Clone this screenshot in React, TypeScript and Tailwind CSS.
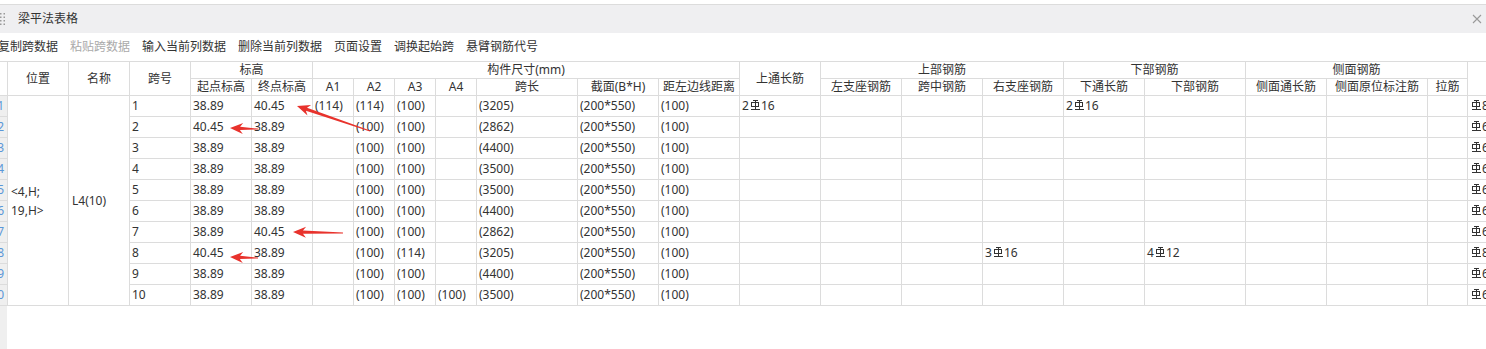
import React from "react";

const FONT = { fontFamily: '"Noto Sans", "Noto Sans CJK SC", sans-serif' };

// rebar grade glyph (HRB400), drawn since no font carries it
function Bar() {
  return (
    <svg width="10" height="10" viewBox="0 0 10 10" className="inline-block -mt-[3px] mx-[1px] shrink-0">
      <g stroke="#333" strokeWidth="1" fill="none" shapeRendering="crispEdges">
        <line x1="2.5" y1="0.5" x2="7.5" y2="0.5" />
        <rect x="1.5" y="2.5" width="7" height="4" />
        <line x1="5" y1="0.5" x2="5" y2="9" />
        <line x1="0.5" y1="9" x2="9.5" y2="9" />
      </g>
    </svg>
  );
}

type V = string | { n?: string; d: string };

function Val({ v }: { v: V }) {
  if (typeof v === "string") return <>{v}</>;
  return (
    <span className="inline-flex items-center">
      {v.n}
      <Bar />
      {v.d}
    </span>
  );
}

const E = "";
const r = (n: string, d: string) => ({ n, d });

// 跨号, 起点, 终点, A1..A4, 跨长, 截面, 距左, 上通长, 左支座, 跨中, 右支座, 下通长, 下部, 侧通长, 侧原位, 拉筋, 末列
const ROWS: V[][] = [
  ["1", "38.89", "40.45", "(114)", "(114)", "(100)", E, "(3205)", "(200*550)", "(100)", r("2", "16"), E, E, E, r("2", "16"), E, E, E, E, r("", "8")],
  ["2", "40.45", "38.89", E, "(100)", "(100)", E, "(2862)", "(200*550)", "(100)", E, E, E, E, E, E, E, E, E, r("", "6")],
  ["3", "38.89", "38.89", E, "(100)", "(100)", E, "(4400)", "(200*550)", "(100)", E, E, E, E, E, E, E, E, E, r("", "6")],
  ["4", "38.89", "38.89", E, "(100)", "(100)", E, "(3500)", "(200*550)", "(100)", E, E, E, E, E, E, E, E, E, r("", "6")],
  ["5", "38.89", "38.89", E, "(100)", "(100)", E, "(3500)", "(200*550)", "(100)", E, E, E, E, E, E, E, E, E, r("", "6")],
  ["6", "38.89", "38.89", E, "(100)", "(100)", E, "(4400)", "(200*550)", "(100)", E, E, E, E, E, E, E, E, E, r("", "6")],
  ["7", "38.89", "40.45", E, "(100)", "(100)", E, "(2862)", "(200*550)", "(100)", E, E, E, E, E, E, E, E, E, r("", "6")],
  ["8", "40.45", "38.89", E, "(100)", "(114)", E, "(3205)", "(200*550)", "(100)", E, E, E, r("3", "16"), E, r("4", "12"), E, E, E, r("", "8")],
  ["9", "38.89", "38.89", E, "(100)", "(100)", E, "(4400)", "(200*550)", "(100)", E, E, E, E, E, E, E, E, E, r("", "6")],
  ["10", "38.89", "38.89", E, "(100)", "(100)", "(100)", "(3500)", "(200*550)", "(100)", E, E, E, E, E, E, E, E, E, r("", "6")],
];

const TOOLS = ["复制跨数据", "粘贴跨数据", "输入当前列数据", "删除当前列数据", "页面设置", "调换起始跨", "悬臂钢筋代号"];

function H({ children, className = "" }: { children?: React.ReactNode; className?: string }) {
  return <div className={`bg-white flex items-center justify-center whitespace-nowrap ${className}`}>{children}</div>;
}

function arrow(x1: number, y1: number, x2: number, y2: number) {
  const L = Math.hypot(x2 - x1, y2 - y1);
  const dx = (x2 - x1) / L, dy = (y2 - y1) / L;
  const nx = -dy, ny = dx;
  const h = 13;
  const bx = x2 - dx * h, by = y2 - dy * h;
  const kx = x2 - dx * (h - 3), ky = y2 - dy * (h - 3);
  const p = (x: number, y: number) => `${x.toFixed(1)},${y.toFixed(1)}`;
  return [
    p(x1 + nx * 0.4, y1 + ny * 0.4),
    p(kx + nx * 1.6, ky + ny * 1.6),
    p(bx + nx * 5.5, by + ny * 5.5),
    p(x2, y2),
    p(bx - nx * 5.5, by - ny * 5.5),
    p(kx - nx * 1.6, ky - ny * 1.6),
    p(x1 - nx * 0.4, y1 - ny * 0.4),
  ].join(" ");
}

export default function App() {
  return (
    <div className="relative w-[1486px] h-[349px] overflow-hidden bg-white text-[12px] text-[#333]" style={FONT}>
      <div className="flex flex-col h-full">
        <div className="h-[4px] bg-white" />
        {/* title bar */}
        <div className="h-[29px] border-t border-[#dcdcdc] bg-[#efeff1] flex items-center">
          <svg width="6" height="14" viewBox="0 0 6 14">
            {[1, 4.5, 8, 11.5].map((y) => (
              <g key={y} fill="#999">
                <rect x="0" y={y} width="1.5" height="1.5" />
                <rect x="3.5" y={y} width="1.5" height="1.5" />
              </g>
            ))}
          </svg>
          <span className="ml-[12px] text-[12px] text-[#333]">梁平法表格</span>
          <svg width="10" height="10" viewBox="0 0 10 10" className="ml-auto mr-[4px]">
            <path d="M1 1L9 9M9 1L1 9" stroke="#9a9a9a" strokeWidth="1.1" />
          </svg>
        </div>
        {/* toolbar */}
        <div className="h-[28px] flex items-center gap-3 -ml-[2px]">
          {TOOLS.map((t, i) => (
            <span key={t} className={i === 1 ? "text-[#aaa]" : "text-[#333]"}>
              {t}
            </span>
          ))}
        </div>
        {/* table */}
        <div className="overflow-hidden">
          <div className="w-max grid grid-cols-[7px_60px_60px_60px_60px_60px_40px_40px_40px_40px_100px_80px_80px_80px_80px_80px_80px_80px_100px_80px_100px_39px_60px] grid-rows-[16px_16px_repeat(10,20px)] gap-px py-px bg-[#dcdcdc]">
            <H className="row-span-2" />
            <H className="row-span-2">位置</H>
            <H className="row-span-2">名称</H>
            <H className="row-span-2">跨号</H>
            <H className="col-span-2">标高</H>
            <H className="col-span-7">构件尺寸(mm)</H>
            <H className="row-span-2">上通长筋</H>
            <H className="col-span-3">上部钢筋</H>
            <H className="col-span-2">下部钢筋</H>
            <H className="col-span-3">侧面钢筋</H>
            <H className="row-span-2" />
            {["起点标高", "终点标高", "A1", "A2", "A3", "A4", "跨长", "截面(B*H)", "距左边线距离", "左支座钢筋", "跨中钢筋", "右支座钢筋", "下通长筋", "下部钢筋", "侧面通长筋", "侧面原位标注筋", "拉筋"].map((t) => (
              <H key={t}>{t}</H>
            ))}
            {ROWS.map((row, i) => (
              <React.Fragment key={i}>
                <div className="bg-[#efefef] overflow-hidden flex items-center justify-end pr-[3px] text-[#5b97d8]">
                  <span>{i + 1}</span>
                </div>
                {i === 0 && (
                  <>
                    <div className="row-span-10 bg-white flex flex-col justify-center pl-[3px] leading-[19px]">
                      <span>&lt;4,H;</span>
                      <span>19,H&gt;</span>
                    </div>
                    <div className="row-span-10 bg-white flex items-center pl-[3px]">L4(10)</div>
                  </>
                )}
                {row.map((v, j) => (
                  <div key={j} className="bg-white flex items-center pl-[2px] whitespace-nowrap overflow-hidden">
                    <Val v={v} />
                  </div>
                ))}
              </React.Fragment>
            ))}
          </div>
        </div>
        <div className="flex-1 w-[7px] bg-[#efefef]" />
      </div>
      {/* red annotation arrows */}
      <svg className="absolute inset-0 pointer-events-none" width="1486" height="349">
        <g fill="#e8322c">
          <polygon points={arrow(370, 131, 297, 106)} />
          <polygon points={arrow(258, 129, 230, 128)} />
          <polygon points={arrow(343, 233, 293, 232)} />
          <polygon points={arrow(258, 258, 230, 257)} />
        </g>
      </svg>
    </div>
  );
}
